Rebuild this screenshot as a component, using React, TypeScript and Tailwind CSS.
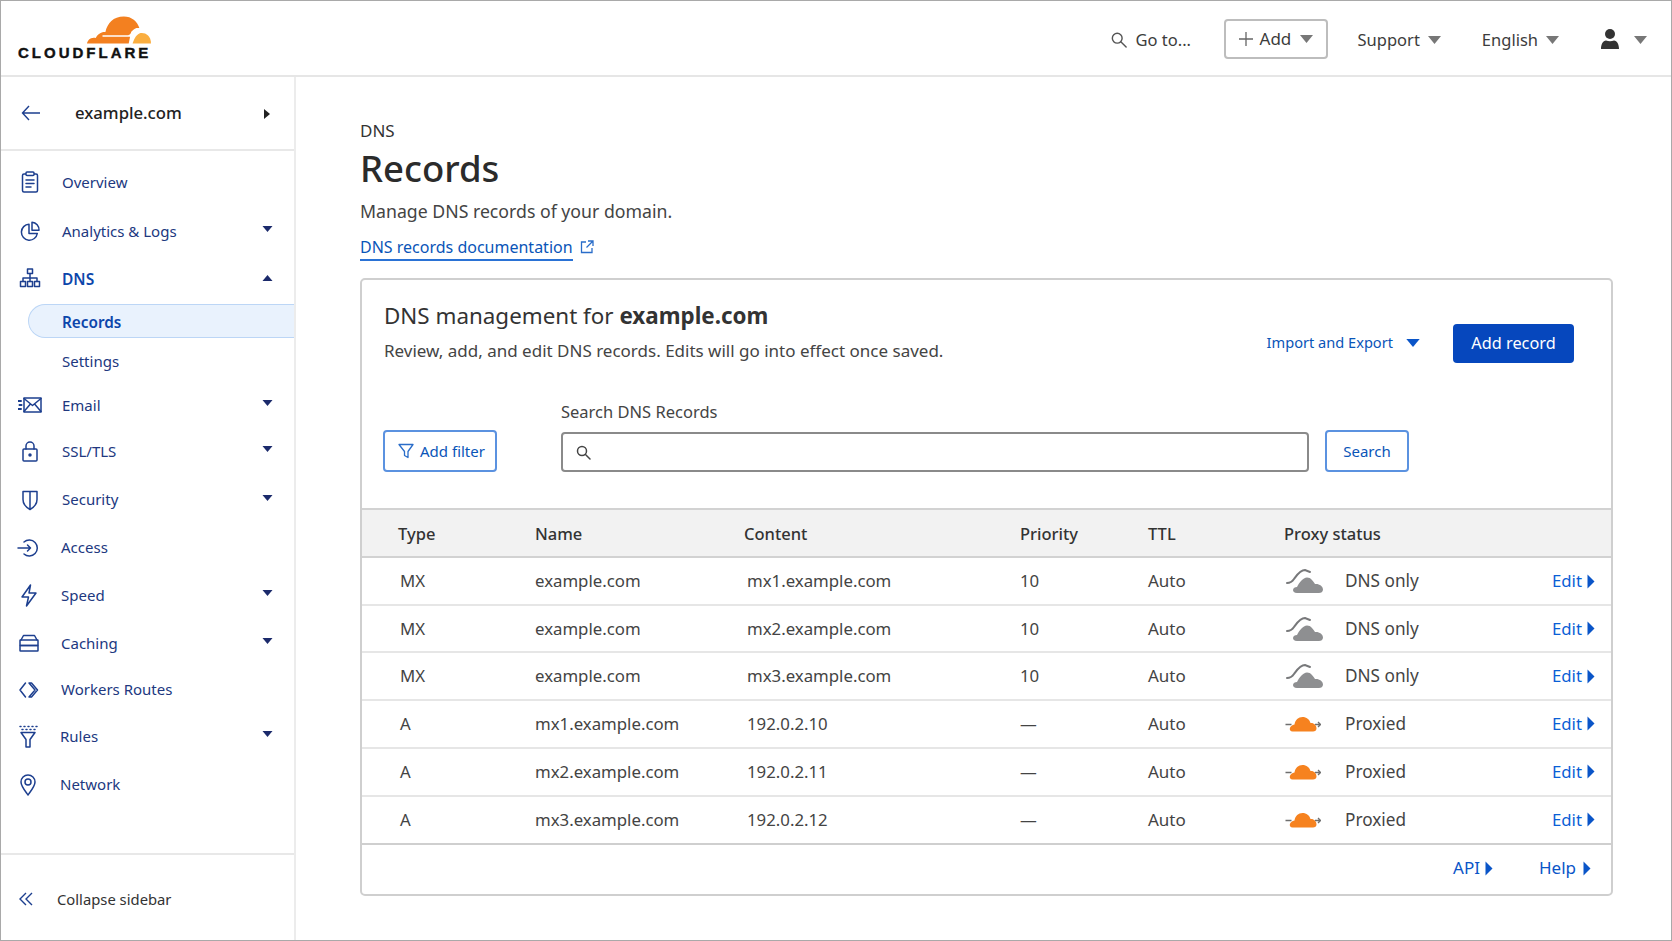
import React from "react";

const NAVY = "#1d3f8f";

function Caret({ up = false, color = "#1b2a6b", w = 11, h = 6 }: { up?: boolean; color?: string; w?: number; h?: number }) {
  return (
    <svg width={w} height={h} viewBox="0 0 10 6" className="block shrink-0">
      <path d={up ? "M5 0 L10 6 L0 6 Z" : "M0 0 L10 0 L5 6 Z"} fill={color} />
    </svg>
  );
}

function RightCaret({ color = "#0a55c8" }: { color?: string }) {
  return (
    <svg width="8" height="15" viewBox="0 0 8 15" className="block shrink-0">
      <path d="M0.5 0.5 L7.5 7.5 L0.5 14.500 Z" fill={color} />
    </svg>
  );
}

function Ic({ children, w = 24, h = 24 }: { children: React.ReactNode; w?: number; h?: number }) {
  return (
    <svg width={w} height={h} viewBox={`0 0 ${w} ${h}`} fill="none" stroke={NAVY} strokeWidth="1.5" strokeLinejoin="round" strokeLinecap="round" className="block shrink-0">
      {children}
    </svg>
  );
}

const icons: Record<string, React.ReactNode> = {
  overview: (
    <Ic>
      <rect x="4.5" y="4" width="15" height="18" rx="1.5" />
      <rect x="8" y="2" width="8" height="3.5" rx="1" fill="#fff" />
      <path d="M8 10h8M8 13.5h8M8 17h5" />
    </Ic>
  ),
  analytics: (
    <Ic>
      <path d="M11 5.200a8 8 0 1 0 8.300 9.300H11z" />
      <path d="M14 3.200a7.500 7.500 0 0 1 7 8h-7z" />
    </Ic>
  ),
  dns: (
    <Ic>
      <rect x="9.5" y="3" width="5" height="4.5" />
      <path d="M12 7.5V12M5 15.5V12h14v3.5M12 12v3.5" />
      <rect x="2.5" y="15.5" width="5" height="5" />
      <rect x="9.5" y="15.5" width="5" height="5" />
      <rect x="16.5" y="15.5" width="5" height="5" />
    </Ic>
  ),
  email: (
    <Ic>
      <rect x="6" y="5" width="17" height="14" />
      <path d="M6 5.5l8.5 7 8.5-7M6 18.5l6-7M23 18.5l-6-7" />
      <path d="M0.5 8h2.5M1.5 12h2M0.5 16h2.5" strokeWidth="2" />
    </Ic>
  ),
  ssl: (
    <Ic>
      <rect x="5" y="10" width="14" height="12" rx="1" />
      <path d="M8 10V7a4 4 0 0 1 8 0v3" />
      <circle cx="12" cy="16" r="1" fill={NAVY} />
    </Ic>
  ),
  security: (
    <Ic>
      <path d="M5 3.5c4.5 0 9.5 0 14 0v8c0 5-3.5 8-7 10-3.500-2-7-5-7-10z" />
      <path d="M12 4v17" />
    </Ic>
  ),
  access: (
    <Ic>
      <path d="M7 6a8 8 0 1 1 0 12" />
      <path d="M1 12h12.500M10.500 9l3 3-3 3" />
    </Ic>
  ),
  speed: (
    <Ic>
      <path d="M13.500 2L5 14h6.500L9.500 23 19 10h-7z" />
    </Ic>
  ),
  caching: (
    <Ic>
      <path d="M4 9l2.500-4.500h11L20 9" />
      <rect x="3" y="9" width="18" height="5.500" rx="0.5" />
      <rect x="3" y="14.500" width="18" height="5.500" rx="0.5" />
    </Ic>
  ),
  workers: (
    <Ic>
      <path d="M8.500 5L3 12l5.500 7M12 5h2.500l6 7-6 7H12l6-7z" />
    </Ic>
  ),
  rules: (
    <Ic>
      <path d="M5 8.500h14l-5 7v7.500h-4v-7.500z" />
      <path d="M4 2.500h1M8 2.500h1M12 2.500h1M16 2.500h1M20 2.500h1M6 5.500h1M10 5.500h1M14 5.500h1M18 5.500h1" />
    </Ic>
  ),
  network: (
    <Ic>
      <path d="M12 23c-4-5.500-7-9-7-13a7 7 0 0 1 14 0c0 4-3 7.500-7 13z" />
      <circle cx="12" cy="10" r="3" />
    </Ic>
  ),
};

type Item = { k: string; label: string; h: string; caret?: boolean; ml: string };

const top: Item[] = [
  { k: "overview", label: "Overview", h: "h-[50px]", ml: "ml-[17px]" },
  { k: "analytics", label: "Analytics & Logs", h: "h-[48px]", caret: true, ml: "ml-[17px]" },
];

const rest: Item[] = [
  { k: "email", label: "Email", h: "h-[44px] mt-[1px]", caret: true, ml: "ml-[17px]" },
  { k: "ssl", label: "SSL/TLS", h: "h-[48px]", caret: true, ml: "ml-[17px]" },
  { k: "security", label: "Security", h: "h-[49px]", caret: true, ml: "ml-[17px]" },
  { k: "access", label: "Access", h: "h-[47px]", ml: "ml-[16px]" },
  { k: "speed", label: "Speed", h: "h-[48px]", caret: true, ml: "ml-[16px]" },
  { k: "caching", label: "Caching", h: "h-[48px]", caret: true, ml: "ml-[16px]" },
  { k: "workers", label: "Workers Routes", h: "h-[45px]", ml: "ml-[16px]" },
  { k: "rules", label: "Rules", h: "h-[48px]", caret: true, ml: "ml-[15px]" },
  { k: "network", label: "Network", h: "h-[48px]", ml: "ml-[15px]" },
];

function NavRow({ it }: { it: Item }) {
  return (
    <div className={`flex items-center ${it.h} ${it.ml} pr-[21px]`}>
      <span className="w-[44px] flex shrink-0">{icons[it.k]}</span>
      <span className="text-[15px] text-[#21387f] flex-1 whitespace-nowrap">{it.label}</span>
      {it.caret && <span className="-mt-[4px]"><Caret /></span>}
    </div>
  );
}

function CloudGray() {
  return (
    <svg width="38" height="26" viewBox="0 0 38 26" className="block shrink-0">
      <path d="M2 15c3 0 5-1 7-4c3-4 6-9 11-9l5 2" fill="none" stroke="#77787a" strokeWidth="2" strokeLinecap="round" />
      <path d="M12 25C9 25 8 23.500 8 22C8 20 10 19 12 19C14 15 18 9.500 22 9.500C26 9.500 28 13 30 16C34 15.500 38 18 38 21.500C38 24 36 25 34 25Z" fill="#8e8f91" />
    </svg>
  );
}

function CloudOrange() {
  return (
    <svg width="36" height="18" viewBox="0 0 36 18" className="block shrink-0">
      <path d="M0.500 9.500h6M30 9.500h5.500M33 7l2.500 2.500-2.500 2.500" fill="none" stroke="#6f6f6f" strokeWidth="1.300" />
      <path d="M7.500 16.500C5.500 16.500 4.500 15 4.800 13.500C5.200 11.500 7 10 9.500 9.500C10 5 13.500 2 17.500 2C21.500 2 24.500 4.500 25.500 8C28.500 7.500 31.500 10 31.500 13.500C31.500 15.500 30 16.500 28 16.500Z" fill="#f6821f" />
    </svg>
  );
}

const rows = [
  { t: "MX", n: "example.com", c: "mx1.example.com", p: "10", px: false, h: "h-[48px]" },
  { t: "MX", n: "example.com", c: "mx2.example.com", p: "10", px: false, h: "h-[47px]" },
  { t: "MX", n: "example.com", c: "mx3.example.com", p: "10", px: false, h: "h-[48px]" },
  { t: "A", n: "mx1.example.com", c: "192.0.2.10", p: "—", px: true, h: "h-[48px]" },
  { t: "A", n: "mx2.example.com", c: "192.0.2.11", p: "—", px: true, h: "h-[48px]" },
  { t: "A", n: "mx3.example.com", c: "192.0.2.12", p: "—", px: true, h: "h-[48px]" },
];

const cols = "grid grid-cols-[137px_209px_276px_128px_136px_1fr] pl-[36px] items-center";

export default function App() {
  return (
    <div className="w-[1672px] h-[941px] bg-white border border-[#a9a9a9] overflow-hidden flex flex-col text-[#333] font-['Noto_Sans','Open_Sans',sans-serif]">
      <header className="h-[76px] shrink-0 border-b-2 border-[#e6e6e6] flex items-center">
        <div className="ml-[17px] w-[135px] relative h-full">
          <svg width="64" height="30" viewBox="0 0 66 30" className="absolute left-[69px] top-[14px]">
            <path d="M0 29c.5-3 3-6 7-6 .5 0 1.500 0 2 .2C11 19 15 16.500 19 17c2-9 8-16 19-16 8 0 14 5 16 12-1 0-2-.2-3 0-3 1-5 3-6 6l-2 10z" fill="#f38020" />
            <path d="M47 29c1-4 3.500-9 7-10.500 5-1.500 12 1.500 12 10.500z" fill="#faae40" />
            <path d="M16 20.500h29l-1 1.500H16z" fill="#fff" />
            <path d="M46 16c.5 3 1.500 4 4 4.500-2.500.5-4 2-4.500 4-.5-2-1.500-3.500-3.500-4 2.500-.5 3.500-2 4-4.500z" fill="#fff" />
          </svg>
          <span className="absolute left-0 top-[43px] text-[15px] leading-[18px] font-bold tracking-[0.2em] [-webkit-text-stroke:0.4px_#111] text-[#111] font-['Liberation_Sans',sans-serif]">CLOUDFLARE</span>
        </div>
        <div className="ml-auto flex items-center text-[#3c3c3c] text-[16.5px] mt-[4px]">
          <svg width="16" height="16" viewBox="0 0 18 18" fill="none" stroke="#555" strokeWidth="1.600" strokeLinecap="round" className="shrink-0">
            <circle cx="7" cy="7" r="5.500" />
            <path d="M11 11l6 6" />
          </svg>
          <span className="ml-[9px] w-[88px] whitespace-nowrap">Go to...</span>
          <div className="w-[104px] h-[40px] border-2 border-[#bdbdbd] rounded-[4px] flex items-center pl-[13px] gap-[7px] -mt-[3px] text-[17px]">
            <svg width="14" height="14" viewBox="0 0 14 14" stroke="#666" strokeWidth="1.300" className="shrink-0"><path d="M7 0v14M0 7h14" /></svg>
            <span className="whitespace-nowrap">Add</span>
            <span className="ml-[2px]"><Caret color="#777" w={13} h={8} /></span>
          </div>
          <span className="ml-[30px] whitespace-nowrap">Support</span>
          <span className="ml-[8px]"><Caret color="#777" w={13} h={8} /></span>
          <span className="ml-[41px] whitespace-nowrap">English</span>
          <span className="ml-[8px]"><Caret color="#777" w={13} h={8} /></span>
          <svg width="20" height="22" viewBox="0 0 20 22" fill="#333" className="ml-[41px] shrink-0 -mt-[2px]">
            <circle cx="10" cy="6" r="5" />
            <path d="M1 21c0-5 2-8 5-8.500 2.500 1 5.500 1 8 0 3 .5 5 3.500 5 8.500z" />
          </svg>
          <span className="ml-[14px] mr-[24px] -mt-[1px]"><Caret color="#777" w={13} h={8} /></span>
        </div>
      </header>

      <div className="flex flex-1 min-h-0">
        <aside className="w-[295px] shrink-0 border-r-2 border-[#ececec] flex flex-col">
          <div className="h-[74px] shrink-0 border-b-2 border-[#e8e8e8] flex items-center pl-[20px] pr-[24px]">
            <svg width="20" height="16" viewBox="0 0 20 16" fill="none" stroke={NAVY} strokeWidth="1.400" className="shrink-0">
              <path d="M19 8H1.500M8 1L1.500 8 8 15" />
            </svg>
            <span className="ml-[34px] text-[16.7px] font-medium text-[#222] flex-1">example.com</span>
            <svg width="6" height="10" viewBox="0 0 6 10" className="shrink-0 mt-[2px]"><path d="M0 0l6 5-6 5z" fill="#222" /></svg>
          </div>
          <nav className="pt-[6px]">
            {top.map((it) => <NavRow key={it.k} it={it} />)}
            <div className="flex items-center h-[46px] ml-[17px] pr-[21px]">
              <span className="w-[44px] flex shrink-0">{icons.dns}</span>
              <span className="text-[15.5px] font-semibold text-[#0c46ab] flex-1 pt-[3px]">DNS</span>
              <span className="-mt-[1px]"><Caret up /></span>
            </div>
            <div className="ml-[27px] mt-[3px] h-[34px] pt-[2px] border border-r-0 border-[#bcd6f6] bg-[#e9f2fd] rounded-l-full flex items-center pl-[33px] text-[15.3px] font-semibold text-[#0c46ab]">Records</div>
            <div className="mt-[2px] h-[42px] flex items-center pl-[61px] text-[15px] text-[#21387f]">Settings</div>
            {rest.map((it) => <NavRow key={it.k} it={it} />)}
          </nav>
          <div className="mt-auto h-[86px] border-t-2 border-[#e8e8e8] flex items-center pl-[18px] pt-[4px] mb-[1px]">
            <svg width="14" height="14" viewBox="0 0 14 14" fill="none" stroke={NAVY} strokeWidth="1.400" className="shrink-0">
              <path d="M7 1L1 7l6 6M13 1L7 7l6 6" />
            </svg>
            <span className="ml-[24px] text-[14.8px] text-[#333] whitespace-nowrap">Collapse sidebar</span>
          </div>
        </aside>

        <main className="flex-1 min-w-0 pl-[64px] pr-[58px]">
          <div className="mt-[42px] text-[17px] leading-[24px] text-[#333]">DNS</div>
          <h1 className="mt-[1px] text-[36.5px] leading-[48px] font-medium text-[#2b2b2b]">Records</h1>
          <p className="mt-[6px] text-[17.7px] leading-[26px] text-[#444]">Manage DNS records of your domain.</p>
          <div className="mt-[11px] flex items-center h-[26px]">
            <a className="text-[16px] leading-[23px] text-[#0a55b8] border-b-2 border-[#2a72d5] whitespace-nowrap">DNS records documentation</a>
            <svg width="14" height="14" viewBox="0 0 14 14" fill="none" stroke="#2a6dc9" strokeWidth="1.300" className="ml-[7px] -mt-[2px] shrink-0">
              <path d="M6 2H1.500v10.500H12V8M8 1h5v5M13 1L6.500 7.500" />
            </svg>
          </div>

          <section className="mt-[17px] h-[618px] border-2 border-[#cfcfcf] rounded-[5px] flex flex-col">
            <div className="h-[228px] shrink-0 relative flex flex-col">
              <div className="flex pl-[22px] pr-[37px] pt-[43px]">
                <div className="flex-1">
                  <h2 className="text-[22.4px] leading-[32px] text-[#333] -mt-[23px]">DNS management for <b className="font-bold">example.com</b></h2>
                  <p className="mt-[6px] text-[17px] leading-[26px] text-[#444] whitespace-nowrap">Review, add, and edit DNS records. Edits will go into effect once saved.</p>
                </div>
                <div className="flex items-center h-[40px] text-[14.6px] text-[#0a55b8]">
                  <span className="whitespace-nowrap">Import and Export</span>
                  <span className="ml-[13px]"><Caret color="#0a55c8" w={14} h={8} /></span>
                  <div className="ml-[33px] w-[121px] h-[39px] rounded-[4px] bg-[#0647bd] text-white flex items-center justify-center text-[16.3px]">Add record</div>
                </div>
              </div>
              <div className="flex items-end pl-[21px] mt-[36px]">
                <div className="w-[114px] h-[42px] border-2 border-[#5b92e0] rounded-[4px] flex items-center pl-[13px] text-[15px] text-[#0a55b8]">
                  <svg width="16" height="16" viewBox="0 0 16 16" fill="none" stroke="#2a6dc9" strokeWidth="1.300" strokeLinejoin="round" className="shrink-0">
                    <path d="M1 1.500h14L10 8.500V14.500L6.500 12.500V8.500z" />
                  </svg>
                  <span className="ml-[6px] whitespace-nowrap">Add filter</span>
                </div>
                <div className="ml-[64px]">
                  <div className="text-[16.5px] leading-[24px] text-[#444] mb-[8px]">Search DNS Records</div>
                  <div className="w-[748px] h-[40px] border-2 border-[#8a8a8a] rounded-[4px] flex items-center pl-[13px]">
                    <svg width="15" height="15" viewBox="0 0 15 15" fill="none" stroke="#444" strokeWidth="1.500" strokeLinecap="round">
                      <circle cx="6" cy="6" r="4.500" />
                      <path d="M9.500 9.500L14 14" />
                    </svg>
                  </div>
                </div>
                <div className="ml-[16px] w-[84px] h-[42px] border-2 border-[#5b92e0] rounded-[4px] flex items-center justify-center text-[15px] text-[#0a55b8]">Search</div>
              </div>
            </div>

            <div className={`${cols} h-[50px] pt-[3px] bg-[#f2f2f2] border-y-2 border-[#d2d2d2] text-[16.5px] font-medium text-[#333]`}>
              <span>Type</span><span>Name</span><span>Content</span><span>Priority</span><span>TTL</span><span>Proxy status</span>
            </div>

            {rows.map((r, i) => (
              <div key={r.c} className={`${cols} ${r.h} text-[16.8px] ${i < 5 ? "border-b-2 border-[#e6e6e6]" : "border-b-2 border-[#cfcfcf]"}`}>
                <span className="pl-[2px] text-[#444]">{r.t}</span>
                <span className="text-[#444]">{r.n}</span>
                <span className="pl-[3px] text-[#444]">{r.c}</span>
                <span className="text-[#444]">{r.p}</span>
                <span className="text-[#444] text-[17px]">Auto</span>
                <div className="flex items-center pr-[16px]">
                  <span className="w-[61px] flex shrink-0 pl-[1px]">{r.px ? <CloudOrange /> : <CloudGray />}</span>
                  <span className="text-[#444] whitespace-nowrap text-[17.2px]">{r.px ? "Proxied" : "DNS only"}</span>
                  <a className="ml-auto flex items-center gap-[5px] text-[#0a5fd6]">Edit <RightCaret /></a>
                </div>
              </div>
            ))}

            <div className="flex-1 flex items-center justify-end pr-[20px] pb-[3px] text-[17px] text-[#0a55c8]">
              <a className="flex items-center gap-[5px]">API <RightCaret /></a>
              <a className="flex items-center gap-[7px] ml-[46px]">Help <RightCaret /></a>
            </div>
          </section>
        </main>
      </div>
    </div>
  );
}
